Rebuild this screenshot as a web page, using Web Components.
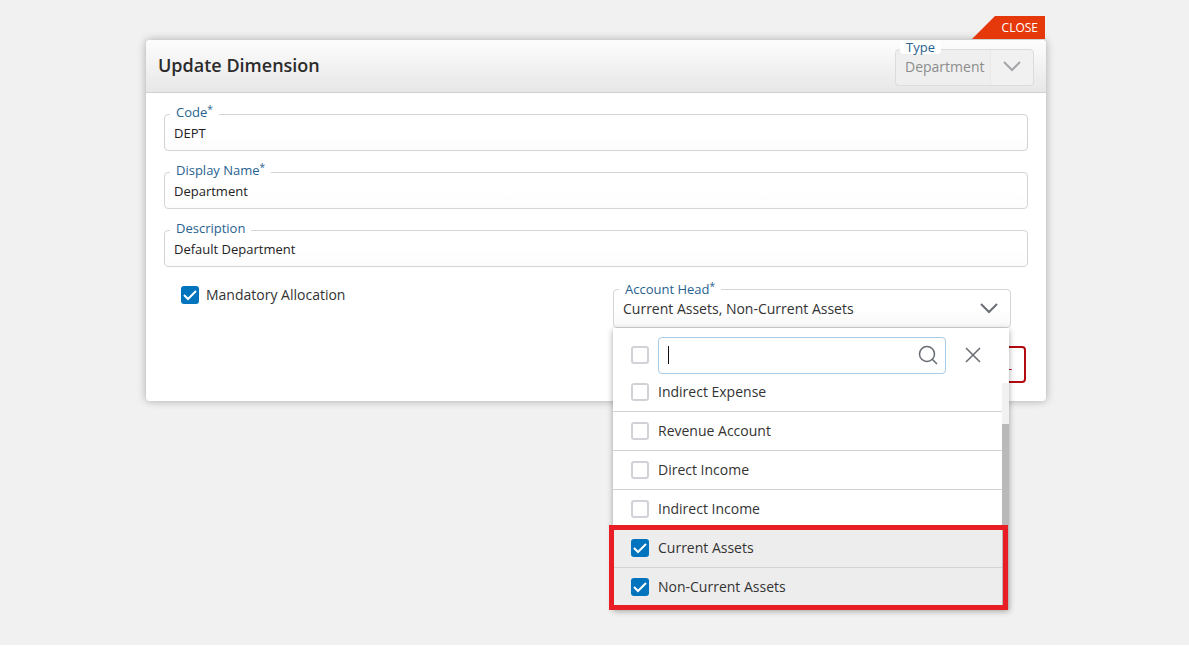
<!DOCTYPE html>
<html lang="en">
<head>
<meta charset="utf-8">
<title>Update Dimension</title>
<style>
body { margin: 0; background: #fff; font-family: "Open Sans", "Noto Sans", sans-serif; font-size: 14px; color: #333; }
</style>
</head>
<body>
<dimension-page></dimension-page>
<script>
const define = (name, html, setup) => customElements.define(name, class extends HTMLElement {
  connectedCallback() {
    if (this.shadowRoot) return;
    this.attachShadow({ mode: 'open' }).innerHTML = '<style>*{box-sizing:border-box}</style>' + html;
    if (setup) setup(this, this.shadowRoot);
  }
});

const labelCss = `
  label { position: absolute; top: -11px; left: 6px; padding: 0 6px; line-height: 18px;
    font-family: "Open Sans", sans-serif; font-size: 13px; color: #28628f; background: #fff; white-space: nowrap; border-radius: 4px; }
  sup { font-size: 10px; line-height: 0; vertical-align: 4px; }`;

const fillLabel = (host, root) => {
  const label = root.querySelector('label');
  label.prepend(host.getAttribute('label'));
  if (host.hasAttribute('required')) label.insertAdjacentHTML('beforeend', '<sup>*</sup>');
};

define('text-field', `
  <style>
    :host { display: block; position: relative; }
    ${labelCss}
    input { display: block; width: 100%; height: 37px; padding: 0 9px; border: 1px solid #d2d4d6; border-radius: 4px;
      background: linear-gradient(#fff 50%, #fcfcfc); font: 13px "Open Sans", sans-serif; color: #222; outline: none; }
  </style>
  <input id="f" type="text"><label for="f"></label>`, (host, root) => {
  fillLabel(host, root);
  root.querySelector('input').value = host.getAttribute('value');
});

define('select-field', `
  <style>
    :host { display: block; position: relative; }
    ${labelCss}
    label { top: -9px; }
    select { display: block; width: 100%; height: 39px; padding: 0 40px 0 9px; border: 1px solid #d2d4d6; border-radius: 4px;
      background: linear-gradient(#fff 50%, #f8f8f8); font: 14px "Open Sans", sans-serif; color: #333; appearance: none; outline: none; opacity: 1; }
    svg { position: absolute; right: 12px; top: 50%; margin-top: -10px; width: 20px; height: 18px; fill: none; stroke: #6a6f76; stroke-width: 2; pointer-events: none; }
    :host([disabled]) select { height: 37px; padding-bottom: 2px; color: #8c8c8c; border-color: #dcdcdc; background: linear-gradient(90deg, #efefef 94px, #e9e9e9 94px, #e9e9e9 95px, #f1f1f1 95px); }
    :host([disabled]) label { left: 5px; line-height: 14px; }
    :host([disabled]) svg { stroke: #a4a6a9; }
  </style>
  <select id="s"><option></option></select><label for="s"></label>
  <svg viewBox="0 0 20 18"><path d="M2 5l8 8 8-8"/></svg>
  <slot></slot>`, (host, root) => {
  fillLabel(host, root);
  root.querySelector('option').textContent = host.getAttribute('value');
  root.querySelector('select').disabled = host.hasAttribute('disabled');
});

define('check-box', `
  <style>
    :host { display: inline-block; }
    label { display: flex; align-items: center; gap: 9px; line-height: 18px; }
    input { appearance: none; display: block; flex: none; width: 18px; height: 18px; margin: 0; border: 2px solid #d0d2d7; border-radius: 3px; background: #fff; }
    :host([large]) label { gap: 7px; }
    input:checked { border: 0; background: #0273bd; }
    .box { position: relative; display: flex; }
    svg { position: absolute; left: 0; top: 0; width: 18px; height: 18px; fill: none; stroke: #fff; stroke-width: 2; display: none; pointer-events: none; }
    input:checked + svg { display: block; }
  </style>
  <label><div class="box"><input type="checkbox"><svg viewBox="0 0 18 18"><path d="M3 9l4 4 8-8"/></svg></div><slot></slot></label>`, (host, root) => {
  const input = root.querySelector('input');
  input.checked = host.hasAttribute('checked');
  if (host.title) input.setAttribute('aria-label', host.title);
});

define('option-row', `
  <style>
    :host { display: flex; align-items: center; flex: none; height: 39px; box-sizing: border-box; padding: 2px 0 0 18px; border-bottom: 1px solid #d3d3d3; background: #fff; }
    :host([selected]) { background: #ededed; }
  </style>
  <slot></slot>`);

define('options-panel', `
  <style>
    :host { display: block; position: absolute; z-index: 2; top: 39px; left: 0; right: 2px; background: #fff; box-shadow: 0 2px 6px rgba(0,0,0,.35); }
    .search { display: flex; align-items: center; height: 55px; padding: 0 28px 0 18px; }
    .box { position: relative; flex: 1; margin: 0 19px 0 9px; }
    input { display: block; width: 100%; height: 37px; border: 1px solid #a5cbe6; border-radius: 4px; padding: 0 40px 0 9px; font: 14px "Open Sans", sans-serif; outline: none; }
    .caret { position: absolute; left: 10px; top: 9px; width: 1px; height: 18px; background: #111; }
    svg { display: block; fill: none; stroke: #666b72; stroke-width: 1.5; }
    .box svg { position: absolute; right: 8px; top: 8px; width: 20px; height: 20px; }
    button { padding: 0 0 2px; border: 0; background: none; }
    .search check-box { margin-bottom: 1px; }
    .view { display: flex; height: 226px; }
    .list { flex: 1; display: flex; flex-direction: column; justify-content: flex-end; overflow: hidden; padding-bottom: 2px; }
    .bar { width: 7px; padding-top: 41px; background: #f1f1f1; }
    .thumb { height: 100%; background: #b9b9b9; }
    .mark { position: absolute; left: -4px; right: 1px; bottom: -1px; height: 85px; border: 5px solid #e91d25; pointer-events: none; }
  </style>
  <div class="search">
    <check-box title="Select all"></check-box>
    <div class="box">
      <input type="text" aria-label="Search"><span class="caret"></span>
      <svg viewBox="0 0 20 20"><circle cx="9" cy="9" r="7.5"/><path d="M14 14l5 5"/></svg>
    </div>
    <button aria-label="Clear"><svg width="16" height="16" viewBox="0 0 16 16"><path d="M1 1l14 14M15 1L1 15"/></svg></button>
  </div>
  <div class="view">
    <div class="list"><slot></slot></div>
    <div class="bar"><div class="thumb"></div></div>
  </div>
  <div class="mark"></div>`);

define('dialog-card', `
  <style>
    :host { display: block; }
    .top { display: flex; justify-content: flex-end; padding: 0 1px 1px 0; }
    .close { width: 73px; height: 23px; padding: 0 7px 0 0; border: 0; text-align: right; background: #e5390b; color: #fff;
      font: 12px "Open Sans", sans-serif; clip-path: polygon(23px 0, 100% 0, 100% 100%, 0 100%); }
    section { background: #fff; border-radius: 4px; box-shadow: 0 0 8px rgba(0,0,0,.3); }
    header { display: flex; align-items: center; justify-content: space-between; height: 53px; padding: 0 12px; border-bottom: 1px solid #d0d0d0;
      border-radius: 4px 4px 0 0; background: linear-gradient(#fdfdfd, #e7e7e7); }
    h1 { margin: 0; padding-bottom: 2px; font-size: 18px; line-height: 24px; font-weight: 600; color: #2b2b2b; }
    .body { padding: 21px 18px 18px; }
  </style>
  <div class="top"><button class="close">CLOSE</button></div>
  <section>
    <header><h1><slot name="title"></slot></h1><slot name="tools"></slot></header>
    <div class="body"><slot></slot></div>
  </section>`);

define('dimension-page', `
  <style>
    :host { display: block; min-height: calc(100vh - 3px); padding: 16px 143px 0 146px; background: #f1f1f1; box-sizing: border-box; }
    .type { width: 139px; margin-top: 2px; }
    .fields { display: grid; gap: 21px; }
    .row { display: grid; grid-template-columns: 1fr 1fr; margin-top: 22px; }
    .row > div { padding: 0 17px; }
    .row check-box { margin-top: -3px; }
    .actions { display: flex; justify-content: flex-end; margin-top: 18px; padding-right: 2px; }
    .cancel { height: 37px; padding: 0 12px; border: 2px solid #b50b10; border-radius: 4px; background: #fff; color: #b50b10; font: 14px "Open Sans", sans-serif; }
    @media (max-width: 800px) { :host { padding: 16px; } .row { grid-template-columns: 1fr; row-gap: 24px; } }
  </style>
  <dialog-card>
    <span slot="title">Update Dimension</span>
    <select-field class="type" slot="tools" label="Type" value="Department" disabled></select-field>
    <div class="fields">
      <text-field label="Code" value="DEPT" required></text-field>
      <text-field label="Display Name" value="Department" required></text-field>
      <text-field label="Description" value="Default Department"></text-field>
    </div>
    <div class="row">
      <div><check-box large checked>Mandatory Allocation</check-box></div>
      <div>
        <select-field label="Account Head" value="Current Assets, Non-Current Assets" required>
          <options-panel>
            <option-row><check-box>Indirect Expense</check-box></option-row>
            <option-row><check-box>Revenue Account</check-box></option-row>
            <option-row><check-box>Direct Income</check-box></option-row>
            <option-row><check-box>Indirect Income</check-box></option-row>
            <option-row selected><check-box checked>Current Assets</check-box></option-row>
            <option-row selected><check-box checked>Non-Current Assets</check-box></option-row>
          </options-panel>
        </select-field>
      </div>
    </div>
    <div class="actions"><button class="cancel">CANCEL</button></div>
  </dialog-card>`);
</script>
</body>
</html>
